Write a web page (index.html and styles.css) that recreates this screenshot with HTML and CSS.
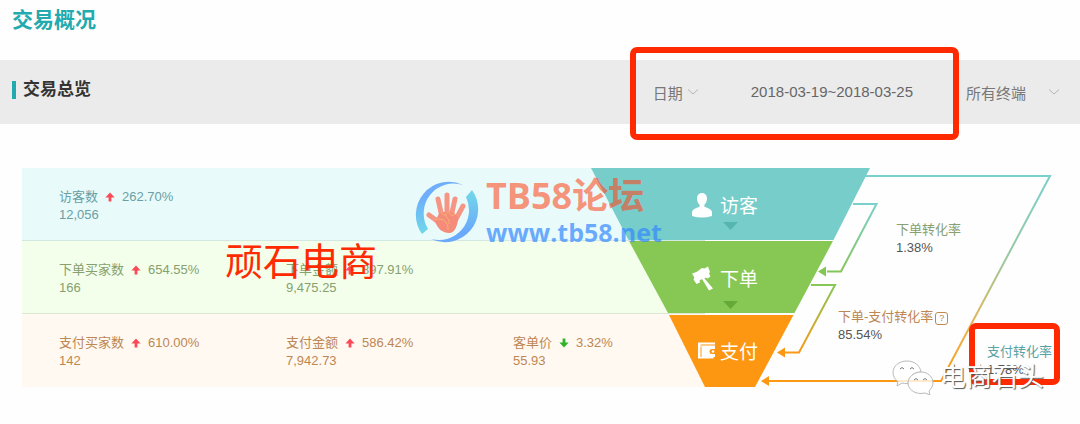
FILE: index.html
```html
<!DOCTYPE html>
<html lang="zh-CN">

<head>
    <meta charset="UTF-8">
    <title>交易概况</title>
    <link rel="stylesheet" href="styles.css">
</head>

<body>
    <h1 class="page_title">交易概况</h1>
    <div class="toolbar">
        <h2 class="toolbar_title">交易总览</h2>
        <div class="date_box">
            <button class="drop" type="button">日期
                <svg class="chevron" viewBox="0 0 12 8"><path d="M1 1.5l5 4.5 5-4.5" /></svg>
            </button>
            <span class="date">2018-03-19~2018-03-25</span>
        </div>
        <button class="drop terminal" type="button">所有终端
            <svg class="chevron" viewBox="0 0 12 8"><path d="M1 1.5l5 4.5 5-4.5" /></svg>
        </button>
    </div>

    <svg class="defs" width="0" height="0">
        <symbol id="arrow" viewBox="0 0 10 10">
            <path d="M5 0.6L9.6 5.4H6.4V9.4H3.6V5.4H0.4z" />
        </symbol>
    </svg>

    <div class="overview">
        <!--数据-->
        <div class="stages">
            <div class="stage visit">
                <div class="item">
                    <div class="line">访客数 <svg class="up"><use href="#arrow" /></svg> 262.70%</div>
                    <div>12,056</div>
                </div>
            </div>
            <div class="stage order">
                <div class="item">
                    <div class="line">下单买家数 <svg class="up"><use href="#arrow" /></svg> 654.55%</div>
                    <div>166</div>
                </div>
                <div class="item">
                    <div class="line">下单金额 <svg class="up"><use href="#arrow" /></svg> 897.91%</div>
                    <div>9,475.25</div>
                </div>
            </div>
            <div class="stage pay">
                <div class="item">
                    <div class="line">支付买家数 <svg class="up"><use href="#arrow" /></svg> 610.00%</div>
                    <div>142</div>
                </div>
                <div class="item">
                    <div class="line">支付金额 <svg class="up"><use href="#arrow" /></svg> 586.42%</div>
                    <div>7,942.73</div>
                </div>
                <div class="item">
                    <div class="line">客单价 <svg class="down"><use href="#arrow" /></svg> 3.32%</div>
                    <div>55.93</div>
                </div>
            </div>
        </div>

        <!--漏斗-->
        <div class="funnel">
            <svg class="shape" viewBox="0 0 467 220">
                <defs>
                    <linearGradient id="g1" gradientUnits="userSpaceOnUse" x1="0" y1="36" x2="0" y2="104">
                        <stop offset="0" stop-color="#7ad0cc" />
                        <stop offset="1" stop-color="#84c655" />
                    </linearGradient>
                    <linearGradient id="g2" gradientUnits="userSpaceOnUse" x1="0" y1="118" x2="0" y2="186">
                        <stop offset="0" stop-color="#86c755" />
                        <stop offset="1" stop-color="#fd9812" />
                    </linearGradient>
                    <linearGradient id="g3" gradientUnits="userSpaceOnUse" x1="0" y1="9" x2="0" y2="214">
                        <stop offset="0" stop-color="#7ad0cc" />
                        <stop offset="0.4" stop-color="#9ac8a0" />
                        <stop offset="0.75" stop-color="#ecb34c" />
                        <stop offset="1" stop-color="#fd9812" />
                    </linearGradient>
                </defs>
                <path d="M0 0H279L242.500 72H37.500z" fill="#76cdca" />
                <path d="M38 73H242L203.500 145H77z" fill="#87c855" />
                <path d="M78 147H202.500L164 219H114z" fill="#fd9711" />
                <path d="M132 54h15l-7.500 8z" fill="#57b5b0" />
                <path d="M132 133h15l-7.500 8z" fill="#65a939" />
                <g fill="none" stroke-width="2">
                    <path d="M262 36H285.500L250 103.500H236" stroke="url(#g1)" />
                    <path d="M220 117H244L208 184.500H194" stroke="url(#g2)" />
                    <path d="M274 8H459L350 213H178" stroke="url(#g3)" />
                </g>
                <path d="M227 103.500l8-5v10z" fill="#84c655" />
                <path d="M186 184.500l8-5v10z" fill="#fd9812" />
                <path d="M170 213l8-5v10z" fill="#fd9812" />
            </svg>
            <div class="step">
                <svg class="icon" viewBox="0 0 24 26">
                    <path d="M12 1c3 0 5 2.300 5 5.600 0 2.500-1 5-2.600 6.200v1.600c1 1.200 7 1.800 7.600 5.600V24q-10 3-20 0v-4c.6-3.800 6.600-4.400 7.600-5.600v-1.600C8 11.600 7 9.100 7 6.600 7 3.300 9 1 12 1z" />
                </svg>
                <span>访客</span>
            </div>
            <div class="step">
                <svg class="icon" viewBox="0 0 24 26">
                    <path d="M2 8.500q5-1 10-5.500l2.500.5 3.500-2 2 5.500-1 1.500 1.500 3-3 2-2-1-1 1L23 23.500l-4 2-7-11.500-2.500 1.500.5 2L6.500 19l-3-4.500.8-2z" />
                </svg>
                <span>下单</span>
            </div>
            <div class="step">
                <svg class="icon wallet" viewBox="0 0 18 18">
                    <path d="M0 0.500h17v2H2.500v1H17V15h-1.500v1.500H0z" />
                    <path d="M3 4.500v10.500" fill="none" stroke="#fd9711" />
                    <path d="M17.500 7H14a2.500 2.500 0 0 0 0 5h3.500z" fill="#fd9711" />
                    <circle cx="15" cy="9.500" r="1.300" />
                </svg>
                <span>支付</span>
            </div>
            <div class="rate rate_order">
                <div class="green">下单转化率</div>
                <div>1.38%</div>
            </div>
            <div class="rate rate_op">
                <div class="brown">下单-支付转化率<button class="help" type="button">?</button></div>
                <div>85.54%</div>
            </div>
            <div class="rate rate_pay">
                <div class="teal">支付转化率</div>
                <div>1.78%</div>
            </div>
        </div>

        <!--水印-->
        <div class="author">顽石电商</div>
        <div class="forum">
            <svg class="forum_logo" viewBox="0 0 70 68">
                <defs>
                    <linearGradient id="ring" x1="0" y1="0" x2="0" y2="1">
                        <stop offset="0.3" stop-color="#6eaefb" />
                        <stop offset="1" stop-color="#6fd9e8" />
                    </linearGradient>
                    <linearGradient id="ring2" x1="0" y1="0" x2="0" y2="1">
                        <stop offset="0" stop-color="#72d9e9" />
                        <stop offset="0.8" stop-color="#6aa9fb" />
                    </linearGradient>
                </defs>
                <path d="M51 7A33 33 0 0 0 10 56L16 51A30 30 0 0 1 51 7z" fill="url(#ring)" />
                <path d="M60 12A33 33 0 0 1 19 61A30 30 0 0 0 54 19z" fill="url(#ring2)" />
                <g class="fingers">
                    <path d="M17 37l11 8M26 21l4 18M35 17v20M43 21l-4 18M51 28l-8 15" />
                </g>
                <path class="hand" d="M28 34h13l5 5c0 8-3 16-9 16-7 0-12-5-14-12z" />
                <path class="palm" d="M23 42c6-3 14 1 13 10M29 33c1 4 4 5 5 3s3-2 4 0 4 2 5-1M34 37c1 4 4 4 3 9" />
            </svg>
            <div class="forum_txt">
                <div class="forum_name">TB58论坛</div>
                <div class="forum_url">www.tb58.net</div>
            </div>
        </div>
        <div class="wechat">
            <svg class="wechat_logo" viewBox="0 0 42 36">
                <path d="M15 2C7 2 1 7 1 13.500c0 4 2 7 5 9L5 27l5-3q2.500.8 6 .6C17 17 23 13 29 13 28 6 22 2 15 2z" />
                <path d="M29 13c-7 0-13 5-13 11s6 10.500 13 10.500l4-.5 5 2-1-4c2-2 4-5 4-8 0-6-5-11-12-11z" />
                <path class="eye" d="M8 10q2-3 4 0M18 10q2-3 4 0M22 21q2-3 4 0M31 21q2-3 4 0" />
            </svg>
            <span>电商石头</span>
        </div>
    </div>
</body>

</html>
```
FILE: styles.css
```css
body {
    margin: 0;
    padding-bottom: 37px;
    background-color: #fefefe;
    color: #555;
    font-family: "Liberation Sans", "Noto Sans CJK SC", sans-serif;
    font-size: 13px;
}

button {
    border: 0;
    padding: 0;
    background: none;
    font-family: inherit;
    color: inherit;
}

.defs {
    position: absolute;
}

.page_title {
    margin: 0;
    padding: 5px 12px 25px;
    font-size: 21px;
    line-height: 30px;
    font-weight: 700;
    color: #22aaae;
}

.toolbar {
    display: flex;
    align-items: center;
    height: 64px;
    padding: 0 20px 0 12px;
    background-color: #ebebeb;
}

.toolbar_title {
    margin: 0 auto 4px 0;
    padding-left: 7px;
    border-left: 4px solid #22aaae;
    font-size: 17px;
    line-height: 18px;
    font-weight: 700;
    color: #333;
}

.date_box {
    position: relative;
    display: flex;
    align-items: center;
    gap: 52px;
    padding: 0 46px 0 23px;
    line-height: 64px;
}

.date_box:before {
    content: "";
    position: absolute;
    top: -13px;
    right: 0;
    bottom: -16px;
    left: 0;
    border: 6px solid #ff2a00;
    border-radius: 7px;
}

.drop {
    display: flex;
    align-items: center;
    gap: 4px;
    font-size: 15px;
    color: #777;
}

.terminal {
    gap: 22px;
    margin-left: 7px;
}

.chevron {
    width: 12px;
    height: 8px;
    fill: none;
    stroke: #b5b5b5;
}

.date {
    font-size: 15px;
    color: #666;
}

/* 数据和漏斗有一部分重叠 */
.overview {
    position: relative;
    display: grid;
    grid-template-columns: 1fr 114px 353px;
    margin: 44px 22px 0;
}

.stages {
    grid-area: 1 / 1 / 2 / 3;
    display: grid;
    grid-template-rows: 73px 73px 73px;
}

.stage {
    display: grid;
    grid-template-columns: 227px 227px 1fr;
    padding: 20px 0 0 37px;
    line-height: 18px;
    box-sizing: border-box;
}

.visit {
    background-color: #e8faf9;
    border-bottom: 1px solid #d4e8e2;
    color: #6a9fa5;
}

.order {
    background-color: #f3ffeb;
    border-bottom: 1px solid #dce8d4;
    color: #87a070;
}

.pay {
    background-color: #fff9f1;
    color: #bd8754;
}

.line {
    display: flex;
    align-items: center;
    gap: 7px;
}

.up,
.down {
    width: 10px;
    height: 10px;
    fill: #fa4a58;
}

.down {
    fill: #2bb52b;
    transform: rotate(180deg);
}

.funnel {
    grid-area: 1 / 2 / 2 / 4;
    position: relative;
    display: grid;
    grid-template-rows: 73px 73px 73px;
}

.shape {
    position: absolute;
    top: 0;
    left: 0;
    width: 467px;
    height: 220px;
}

.step {
    position: relative;
    display: flex;
    align-items: center;
    gap: 6px;
    width: 279px;
    padding-left: 99px;
    box-sizing: border-box;
    font-size: 19px;
    color: #fff;
}

.icon {
    width: 24px;
    height: 26px;
    fill: #fff;
}

.wallet {
    width: 18px;
    height: 18px;
    margin-left: 8px;
    margin-right: -2px;
}

.rate {
    position: absolute;
    line-height: 18px;
}

.rate_order {
    top: 53px;
    left: 305px;
}

.rate_op {
    top: 140px;
    left: 247px;
}

.rate_pay {
    top: 155px;
    right: -2px;
    padding: 14px 2px 0 12px;
    border: 6px solid #ff2a00;
    border-radius: 7px;
}

.green {
    color: #87a070;
}

.brown {
    color: #bd8754;
}

.teal {
    color: #57a3a5;
}

.help {
    width: 13px;
    height: 13px;
    margin-left: 2px;
    border: 1px solid #bd8754;
    border-radius: 3px;
    font-size: 9px;
    line-height: 10px;
}

.author {
    position: absolute;
    top: 66px;
    left: 203px;
    font-size: 38px;
    line-height: 56px;
    color: #ff2a00;
}

.forum {
    position: absolute;
    top: 8px;
    left: 390px;
    display: flex;
    align-items: center;
    gap: 4px;
    font-family: "Open Sans", "Noto Sans CJK SC", sans-serif;
    font-weight: 700;
    white-space: nowrap;
}

.forum_logo {
    width: 70px;
    height: 68px;
}

.fingers {
    fill: none;
    stroke: #f79585;
    stroke-width: 5;
    stroke-linecap: round;
}

.hand {
    fill: #f58b7a;
}

.palm {
    fill: none;
    stroke: #f7b56f;
}

.forum_name {
    font-size: 36px;
    line-height: 40px;
    color: rgba(255, 69, 25, 0.58);
}

.forum_url {
    font-size: 25px;
    line-height: 32px;
    color: rgba(50, 135, 255, 0.7);
}

.wechat {
    position: absolute;
    right: 14px;
    bottom: -8px;
    display: flex;
    align-items: center;
    gap: 6px;
    font-size: 26px;
    line-height: 36px;
    color: #fff;
    text-shadow: 1px 1px 1px #555;
}

.wechat_logo {
    width: 42px;
    height: 36px;
    fill: rgba(255, 255, 255, 0.8);
    stroke: #bbb;
}

.eye {
    fill: none;
    stroke: #777;
}
```
